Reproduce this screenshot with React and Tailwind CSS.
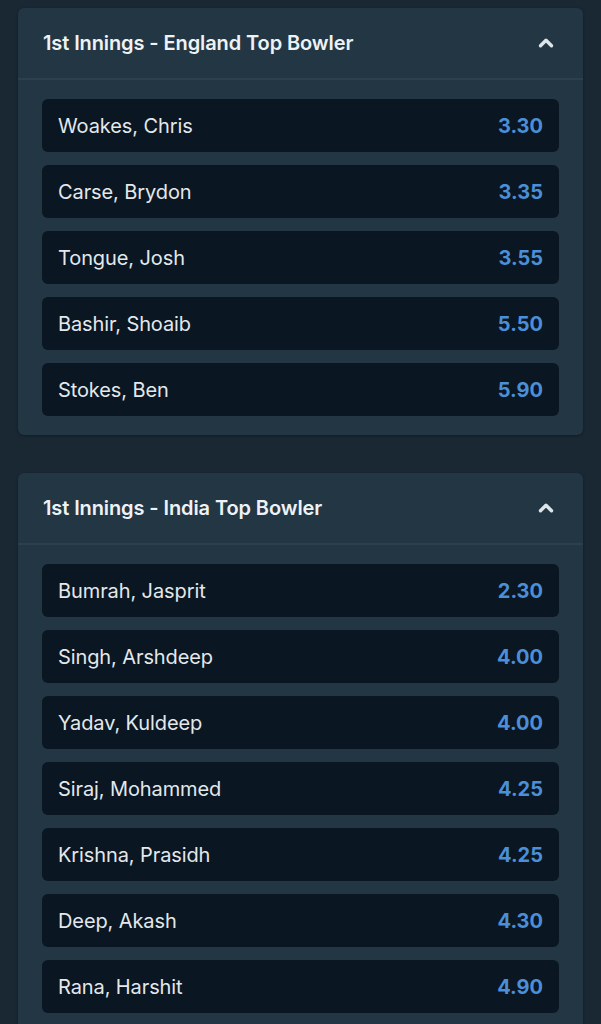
import { ChevronUp } from "lucide-react";

const markets = [
    {
        title: "1st Innings - England Top Bowler",
        runners: [
            { name: "Woakes, Chris", price: "3.30" },
            { name: "Carse, Brydon", price: "3.35" },
            { name: "Tongue, Josh", price: "3.55" },
            { name: "Bashir, Shoaib", price: "5.50" },
            { name: "Stokes, Ben", price: "5.90" },
        ],
    },
    {
        title: "1st Innings - India Top Bowler",
        runners: [
            { name: "Bumrah, Jasprit", price: "2.30" },
            { name: "Singh, Arshdeep", price: "4.00" },
            { name: "Yadav, Kuldeep", price: "4.00" },
            { name: "Siraj, Mohammed", price: "4.25" },
            { name: "Krishna, Prasidh", price: "4.25" },
            { name: "Deep, Akash", price: "4.30" },
            { name: "Rana, Harshit", price: "4.90" },
        ],
    },
];

function Market({ market }) {
    return (
        <div className="bg-[#233644] rounded-md shadow-[0_1px_3px_rgba(0,0,0,0.35)]">
            <div className="h-[72px] flex items-center justify-between pl-[25px] pr-[26px] border-b-2 border-[#2c404e]">
                <h2 className="text-[20px] font-semibold text-[#eef2f5] tracking-[-0.1px]">{market.title}</h2>
                <ChevronUp size={22} strokeWidth={3.75} className="text-[#dde4ea]" />
            </div>
            <div className="px-[24px] pt-[19px] pb-[19px] flex flex-col gap-[13px]">
                {market.runners.map((r) => (
                    <button key={r.name} className="h-[53px] bg-[#0a1621] rounded-md flex items-center justify-between pl-[16px] pr-[16px] text-left">
                        <span className="text-[20px] text-[#e3e8ec] tracking-[-0.1px]">{r.name}</span>
                        <span className="text-[20px] font-bold text-[#4a8fd8]">{r.price}</span>
                    </button>
                ))}
            </div>
        </div>
    );
}

export default function App() {
    return (
        <div className="min-h-screen bg-[#1a2834] px-[18px] pt-[8px] pb-6 flex flex-col gap-[38px] font-['Inter','Noto_Sans',sans-serif]">
            {markets.map((m) => (
                <Market key={m.title} market={m} />
            ))}
        </div>
    );
}
